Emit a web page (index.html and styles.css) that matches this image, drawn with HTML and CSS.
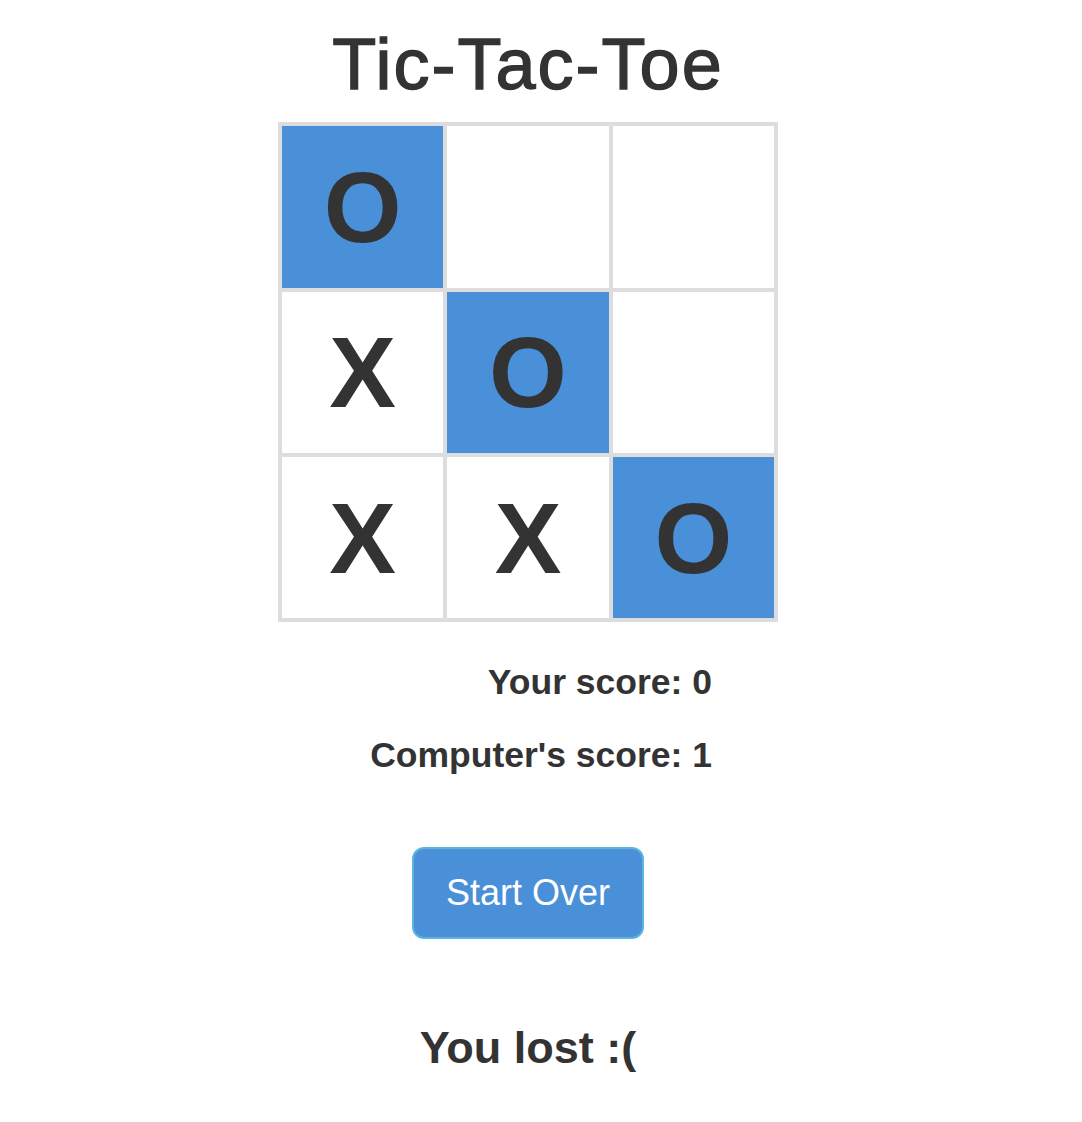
FILE: index.html
```html
<!DOCTYPE html>
<html lang="en">
<head>
<meta charset="utf-8">
<title>Tic-Tac-Toe</title>
<link rel="stylesheet" href="styles.css">
</head>
<body>
<main class="page">
  <h1 class="title">Tic-Tac-Toe</h1>
  <div class="board">
    <div class="cell win">O</div>
    <div class="cell"></div>
    <div class="cell"></div>
    <div class="cell">X</div>
    <div class="cell win">O</div>
    <div class="cell"></div>
    <div class="cell">X</div>
    <div class="cell">X</div>
    <div class="cell win">O</div>
  </div>
  <div class="scores">
    <h4 class="score">Your score: 0</h4>
    <h4 class="score">Computer's score: 1</h4>
  </div>
  <button class="btn" type="button">Start Over</button>
  <h3 class="result">You lost :(</h3>
</main>
</body>
</html>
```
FILE: styles.css
```css
html, body {
  margin: 0;
  padding: 0;
  background: #fff;
}
body {
  font-family: "Liberation Sans", Arial, Helvetica, sans-serif;
  color: #333;
}
.page {
  width: 1056px;
  display: flex;
  flex-direction: column;
  align-items: center;
}
.title {
  margin: 25px 0 0;
  font-size: 72px;
  font-weight: normal;
  line-height: 1.1;
  letter-spacing: 2px;
  -webkit-text-stroke: 1.4px #333;
}
.board {
  margin-top: 18px;
  width: 500px;
  height: 500px;
  box-sizing: border-box;
  padding: 4px;
  gap: 4px;
  background: #ddd;
  display: grid;
  grid-template-columns: repeat(3, 1fr);
  grid-template-rows: repeat(3, 1fr);
}
.cell {
  background: #fff;
  display: flex;
  align-items: center;
  justify-content: center;
  font-size: 100px;
  font-weight: bold;
  line-height: 1;
}
.cell.win {
  background: #4a90d9;
}
.scores {
  width: 370px;
  margin-top: 41px;
  margin-left: -2px;
  display: flex;
  flex-direction: column;
  gap: 34px;
  text-align: right;
}
.score {
  margin: 0;
  font-size: 35.5px;
  font-weight: bold;
  line-height: 1.1;
}
.btn {
  margin-top: 72px;
  font-family: "Liberation Sans", Arial, Helvetica, sans-serif;
  font-size: 36px;
  line-height: 48px;
  padding: 20px 32px;
  color: #fff;
  background: #4a90d9;
  border: 2px solid #5bb5dc;
  border-radius: 12px;
}
.result {
  margin: 84px 0 0;
  font-size: 45px;
  font-weight: bold;
  line-height: 1.1;
}
```
